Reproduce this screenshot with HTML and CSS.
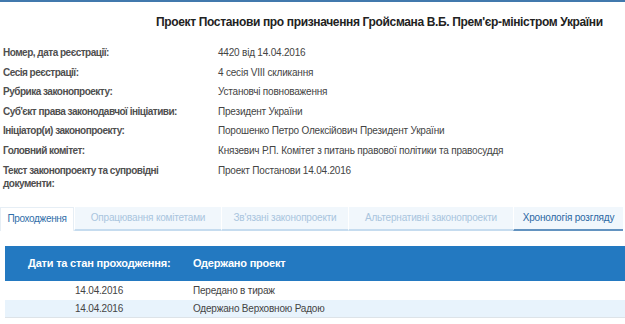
FILE: index.html
```html
<!DOCTYPE html>
<html lang="uk">
<head>
    <meta charset="UTF-8">
    <meta name="viewport" content="width=device-width, initial-scale=1.0">
    <title>Картка законопроекту</title>
    <link rel="stylesheet" href="styles.css">
</head>
<body>
    <div class="bill-page">
        <h1 class="bill-title">Проект Постанови про призначення Гройсмана В.Б. Прем'єр-міністром України</h1>

        <div class="bill-info">
            <div class="info-row">
                <div class="info-label">Номер, дата реєстрації:</div>
                <div class="info-value">4420 від 14.04.2016</div>
            </div>
            <div class="info-row">
                <div class="info-label">Сесія реєстрації:</div>
                <div class="info-value">4 сесія VIII скликання</div>
            </div>
            <div class="info-row">
                <div class="info-label">Рубрика законопроекту:</div>
                <div class="info-value">Установчі повноваження</div>
            </div>
            <div class="info-row">
                <div class="info-label">Суб'єкт права законодавчої ініціативи:</div>
                <div class="info-value">Президент України</div>
            </div>
            <div class="info-row">
                <div class="info-label">Ініціатор(и) законопроекту:</div>
                <div class="info-value">Порошенко Петро Олексійович Президент України</div>
            </div>
            <div class="info-row">
                <div class="info-label">Головний комітет:</div>
                <div class="info-value">Князевич Р.П. Комітет з питань правової політики та правосуддя</div>
            </div>
            <div class="info-row">
                <div class="info-label">Текст законопроекту та супровідні документи:</div>
                <div class="info-value">Проект Постанови 14.04.2016</div>
            </div>
        </div>

        <ul class="tabs">
            <li class="tab active">Проходження</li>
            <li class="tab tab-committees">Опрацювання комітетами</li>
            <li class="tab tab-linked">Зв'язані законопроекти</li>
            <li class="tab tab-alt">Альтернативні законопроекти</li>
            <li class="tab selected">Хронологія розгляду</li>
        </ul>

        <table class="flow-table">
            <thead>
                <tr>
                    <th class="col-date">Дати та стан проходження:</th>
                    <th>Одержано проект</th>
                </tr>
            </thead>
            <tbody>
                <tr>
                    <td class="col-date">14.04.2016</td>
                    <td>Передано в тираж</td>
                </tr>
                <tr class="odd">
                    <td class="col-date">14.04.2016</td>
                    <td>Одержано Верховною Радою</td>
                </tr>
            </tbody>
        </table>
    </div>
</body>
</html>
```

FILE: styles.css
```css
:root {
    --blue: #2379c1;
    --top-line: #4179ad;
    --text: #444444;
    --label: #4f4f4f;
    --tab-bg: #f1f7fc;
    --tab-text: #a9c5de;
    --tab-line: #c6dcef;
    --row-alt: #e8f3fc;
}

* {
    box-sizing: border-box;
    margin: 0;
    padding: 0;
}

body {
    font-family: 'Liberation Sans', Arial, sans-serif;
    font-size: 10px;
    letter-spacing: -0.2px;
    color: var(--text);
    background: #ffffff;
    border-top: 2px solid var(--top-line);
}

.bill-title {
    font-size: 12px;
    font-weight: bold;
    letter-spacing: -0.35px;
    color: #222222;
    padding: 13px 0 0 156px;
    line-height: 15px;
    height: 44px;
    white-space: nowrap;
}

.bill-info {
    display: flex;
    flex-direction: column;
    padding-left: 3px;
}

.info-row {
    display: flex;
    min-height: 19.6px;
    line-height: 13px;
}

.info-label {
    width: 215px;
    flex-shrink: 0;
    font-weight: bold;
    letter-spacing: -0.5px;
    color: var(--label);
    padding-right: 40px;
}

.info-value {
    color: var(--text);
}

.tabs {
    list-style: none;
    display: flex;
    margin-top: 17px;
    height: 24px;
}

.tab {
    line-height: 22px;
    text-align: center;
    color: var(--tab-text);
    background: var(--tab-bg);
    border-bottom: 2px solid var(--tab-line);
    border-left: 1px solid #ffffff;
    white-space: nowrap;
}

.tab.active {
    width: 74px;
    background: #ffffff;
    color: #2f6ea9;
    letter-spacing: -0.35px;
    border: 1px solid #e6eef5;
    border-bottom: none;
}

.tab-committees { width: 147px; }
.tab-linked { width: 127px; }
.tab-alt { width: 165px; }

.tab.selected {
    width: 110px;
    color: #2b67a3;
    border-bottom-color: #6393c0;
}

.flow-table {
    width: 620px;
    margin: 15px 0 0 5px;
    border-collapse: collapse;
}

.flow-table th {
    background: var(--blue);
    color: #ffffff;
    font-size: 11px;
    font-weight: bold;
    text-align: left;
    height: 35px;
    padding: 0;
}

.flow-table th.col-date {
    width: 188px;
    padding-left: 23px;
}

.flow-table td {
    height: 19px;
    padding: 0;
    color: var(--text);
}

.flow-table td.col-date {
    padding-left: 70px;
}

.flow-table tr.odd td {
    height: 18px;
    background: var(--row-alt);
    border-bottom: 1px solid #dde3e8;
}
```
